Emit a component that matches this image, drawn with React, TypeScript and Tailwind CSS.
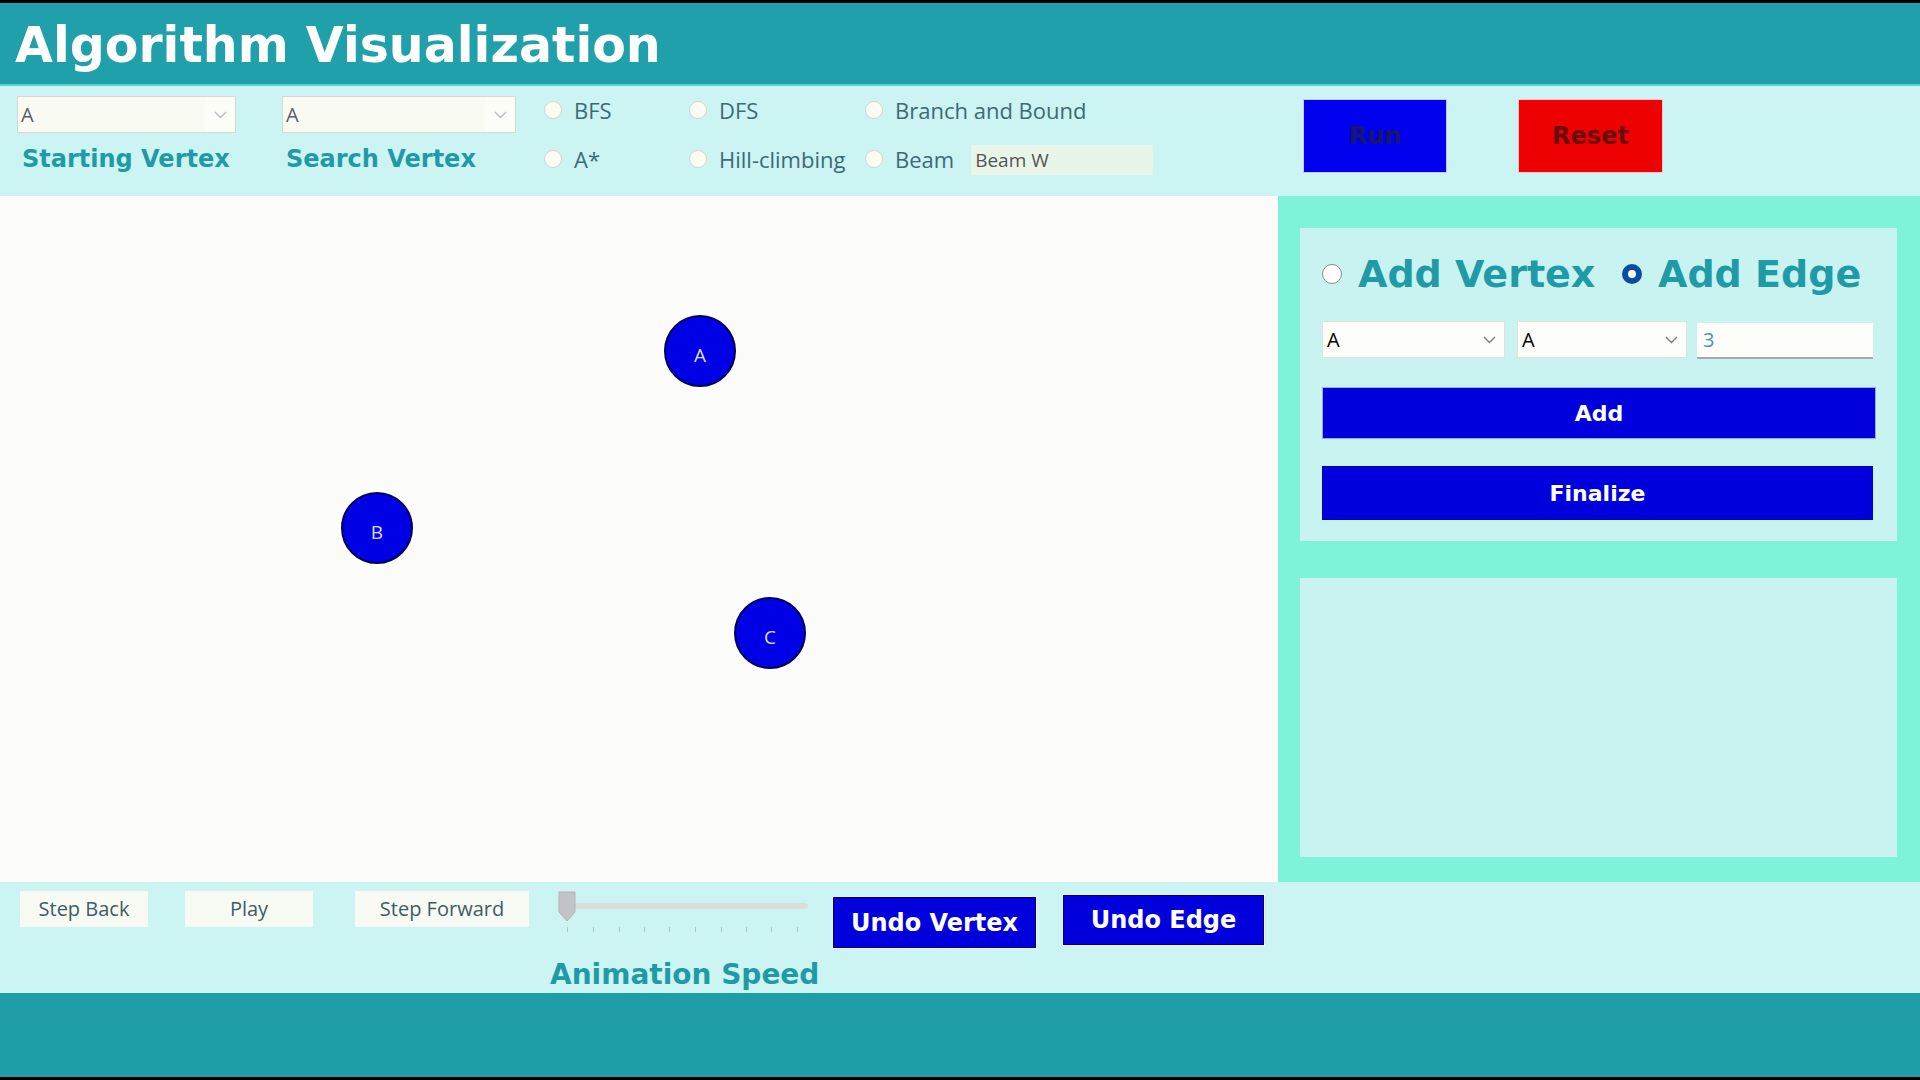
import React from "react";

const BOLD = "font-['DejaVu_Sans','Liberation_Sans',sans-serif] font-bold";
const REG = "font-['Open_Sans','Noto_Sans',sans-serif]";

function Chevron({ className }: { className?: string }) {
  return (
    <svg width="13" height="8" viewBox="0 0 13 8" className={className}>
      <polyline points="1,1 6.5,6.5 12,1" fill="none" stroke="currentColor" strokeWidth="1.4" />
    </svg>
  );
}

function ToolbarCombo({ width }: { width: string }) {
  return (
    <div className={`flex h-[37px] ${width} items-stretch border border-[#d3d9d3] bg-[#f9faf1]`}>
      <span className={`flex flex-1 items-center pl-[3px] text-[20px] text-[#5d5d6c] ${REG}`}>A</span>
      <span className="flex w-[30px] items-center justify-center bg-[#fdfdf8] text-[#b9bcc0]">
        <Chevron />
      </span>
    </div>
  );
}

function CardCombo({ width }: { width: string }) {
  return (
    <div className={`flex h-[37px] ${width} items-center justify-between border border-[#e2e2d6] bg-[#fdfdf9] pl-[4px] pr-[8px]`}>
      <span className={`text-[20px] text-black ${REG}`}>A</span>
      <Chevron className="text-[#7c7c7c]" />
    </div>
  );
}

function Radio({ label }: { label: string }) {
  return (
    <div className="flex items-center gap-[12px]">
      <span className="h-[18px] w-[18px] rounded-full border border-[#d2d8cf] bg-[#fdfcf2]" />
      <span className={`text-[22px] leading-none text-[#3c6b76] ${REG}`}>{label}</span>
    </div>
  );
}

const nodes = [
  { id: "A", left: 664, top: 119 },
  { id: "B", left: 341, top: 296 },
  { id: "C", left: 734, top: 401 },
];

const ticks = [567, 593, 619, 644, 669, 695, 721, 746, 771, 797];

export default function App() {
  return (
    <div className="flex h-[1080px] w-[1920px] flex-col overflow-hidden bg-black pt-[3px] pb-[3px]">
      <header className="flex h-[81px] items-center bg-[#20a0aa] pl-[15px] pt-[4px]">
        <h1 className={`text-[49px] leading-none text-white ${BOLD}`}>Algorithm Visualization</h1>
      </header>
      <div className="h-[2px] bg-[#5ccfcf]" />

      <div className="flex h-[110px] items-start bg-[#cbf4f3] pl-[17px]">
        <div className="mt-[10px] flex w-[219px] flex-col">
          <ToolbarCombo width="w-[219px]" />
          <span className={`mt-[14px] pl-[5px] text-[24px] leading-none text-[#1f9ba7] ${BOLD}`}>Starting Vertex</span>
        </div>
        <div className="ml-[46px] mt-[10px] flex w-[234px] flex-col">
          <ToolbarCombo width="w-[234px]" />
          <span className={`mt-[14px] pl-[4px] text-[24px] leading-none text-[#1f9ba7] ${BOLD}`}>Search Vertex</span>
        </div>
        <div className="ml-[28px] mt-[10px] grid grid-cols-[145px_176px_290px] grid-rows-[28px_28px] gap-y-[21px]">
          <Radio label="BFS" />
          <Radio label="DFS" />
          <Radio label="Branch and Bound" />
          <Radio label="A*" />
          <Radio label="Hill-climbing" />
          <div className="flex items-center">
            <Radio label="Beam" />
            <div className={`ml-[17px] mt-[2px] flex h-[30px] w-[182px] items-center bg-[#e9f5e9] pl-[4px] text-[19px] text-[#555] ${REG}`}>
              Beam W
            </div>
          </div>
        </div>
        <button className={`ml-[148px] mt-[13px] h-[74px] w-[144px] border border-[#c8c8ff] bg-[#0000ee] text-[24px] text-[#17176b] ${BOLD}`}>
          Run
        </button>
        <button className={`ml-[71px] mt-[13px] h-[74px] w-[145px] border border-[#ffc8c8] bg-[#ee0000] text-[24px] text-[#6b0c0c] ${BOLD}`}>
          Reset
        </button>
      </div>

      <div className="flex h-[686px]">
        <div className="relative w-[1278px] bg-[#fcfcfa]">
          {nodes.map((n) => (
            <div
              key={n.id}
              className={`absolute flex h-[72px] w-[72px] items-center justify-center rounded-full border-2 border-[#00005a] bg-[#0000e4] pt-[8px] text-[19px] text-[#dcdcff] ${REG}`}
              style={{ left: n.left, top: n.top }}
            >
              {n.id}
            </div>
          ))}
        </div>

        <div className="flex flex-1 flex-col gap-[37px] bg-[#7ff2da] pb-[25px] pl-[22px] pr-[23px] pt-[32px]">
          <div className="flex h-[313px] flex-col bg-[#c8f3f1] pl-[22px] pt-[22px]">
            <div className="flex h-[48px] items-center">
              <div className="flex w-[300px] items-center gap-[16px]">
                <span className="h-[20px] w-[20px] rounded-full border-[1.5px] border-[#8a8a8a] bg-white" />
                <span className={`text-[38px] leading-none text-[#1f9ba7] ${BOLD}`}>Add Vertex</span>
              </div>
              <div className="flex items-center gap-[16px]">
                <span className="h-[20px] w-[20px] rounded-full border-[6px] border-[#0b4c9c] bg-white" />
                <span className={`text-[38px] leading-none text-[#1f9ba7] ${BOLD}`}>Add Edge</span>
              </div>
            </div>
            <div className="mt-[23px] flex items-start gap-[12px]">
              <CardCombo width="w-[183px]" />
              <CardCombo width="w-[170px]" />
              <div className={`ml-[-2px] mt-[2px] flex h-[36px] w-[176px] items-center border-b-2 border-[#a8a8a8] bg-[#fdfdf9] pl-[6px] text-[20px] text-[#4a8ec4] ${REG}`}>
                3
              </div>
            </div>
            <button className={`mt-[28px] h-[52px] w-[554px] border border-[#9aa8e8] bg-[#0000dd] text-[22px] text-white ${BOLD}`}>
              Add
            </button>
            <button className={`mt-[27px] h-[54px] w-[551px] border border-[#0000aa] bg-[#0000dd] text-[22px] text-white ${BOLD}`}>
              Finalize
            </button>
          </div>
          <div className="flex-1 bg-[#c8f3f1]" />
        </div>
      </div>

      <div className="flex h-[111px] items-start bg-[#cbf4f3] pl-[20px]">
        <button className={`mt-[9px] h-[36px] w-[128px] bg-[#f7fbf3] text-[20px] text-[#3d5d66] ${REG}`}>Step Back</button>
        <button className={`ml-[37px] mt-[9px] h-[36px] w-[128px] bg-[#f7fbf3] text-[20px] text-[#3d5d66] ${REG}`}>Play</button>
        <button className={`ml-[42px] mt-[9px] h-[36px] w-[174px] bg-[#f7fbf3] text-[20px] text-[#3d5d66] ${REG}`}>Step Forward</button>
        <div className="ml-[21px] flex w-[272px] flex-col">
          <div className="relative ml-[7px] h-[52px] w-[251px]">
            <div className="absolute left-[10px] top-[21px] h-[6px] w-[241px] rounded-sm bg-[#dcdcdc]" />
            <svg className="absolute left-0 top-[8px]" width="20" height="33" viewBox="0 0 20 33">
              <path d="M2 2 H18 V22 L10 31 L2 22 Z" fill="#c4c4c8" stroke="#b4b4b8" strokeWidth="1" />
            </svg>
            {ticks.map((x) => (
              <span
                key={x}
                className="absolute top-[45px] h-[5px] w-[1px] bg-[#b8c4c4]"
                style={{ left: x - 557 }}
              />
            ))}
          </div>
          <span className={`mt-[27px] text-[28px] leading-none text-[#1f9ba7] ${BOLD}`}>Animation Speed</span>
        </div>
        <button className={`ml-[11px] mt-[15px] h-[51px] w-[203px] border border-[#00007a] bg-[#0000dd] text-[24px] text-white outline outline-1 outline-[#eef2ff] ${BOLD}`}>
          Undo Vertex
        </button>
        <button className={`ml-[27px] mt-[13px] h-[50px] w-[201px] border border-[#00007a] bg-[#0000dd] text-[24px] text-white outline outline-1 outline-[#eef2ff] ${BOLD}`}>
          Undo Edge
        </button>
      </div>

      <footer className="flex-1 bg-[#1f9ea8]" />
    </div>
  );
}
